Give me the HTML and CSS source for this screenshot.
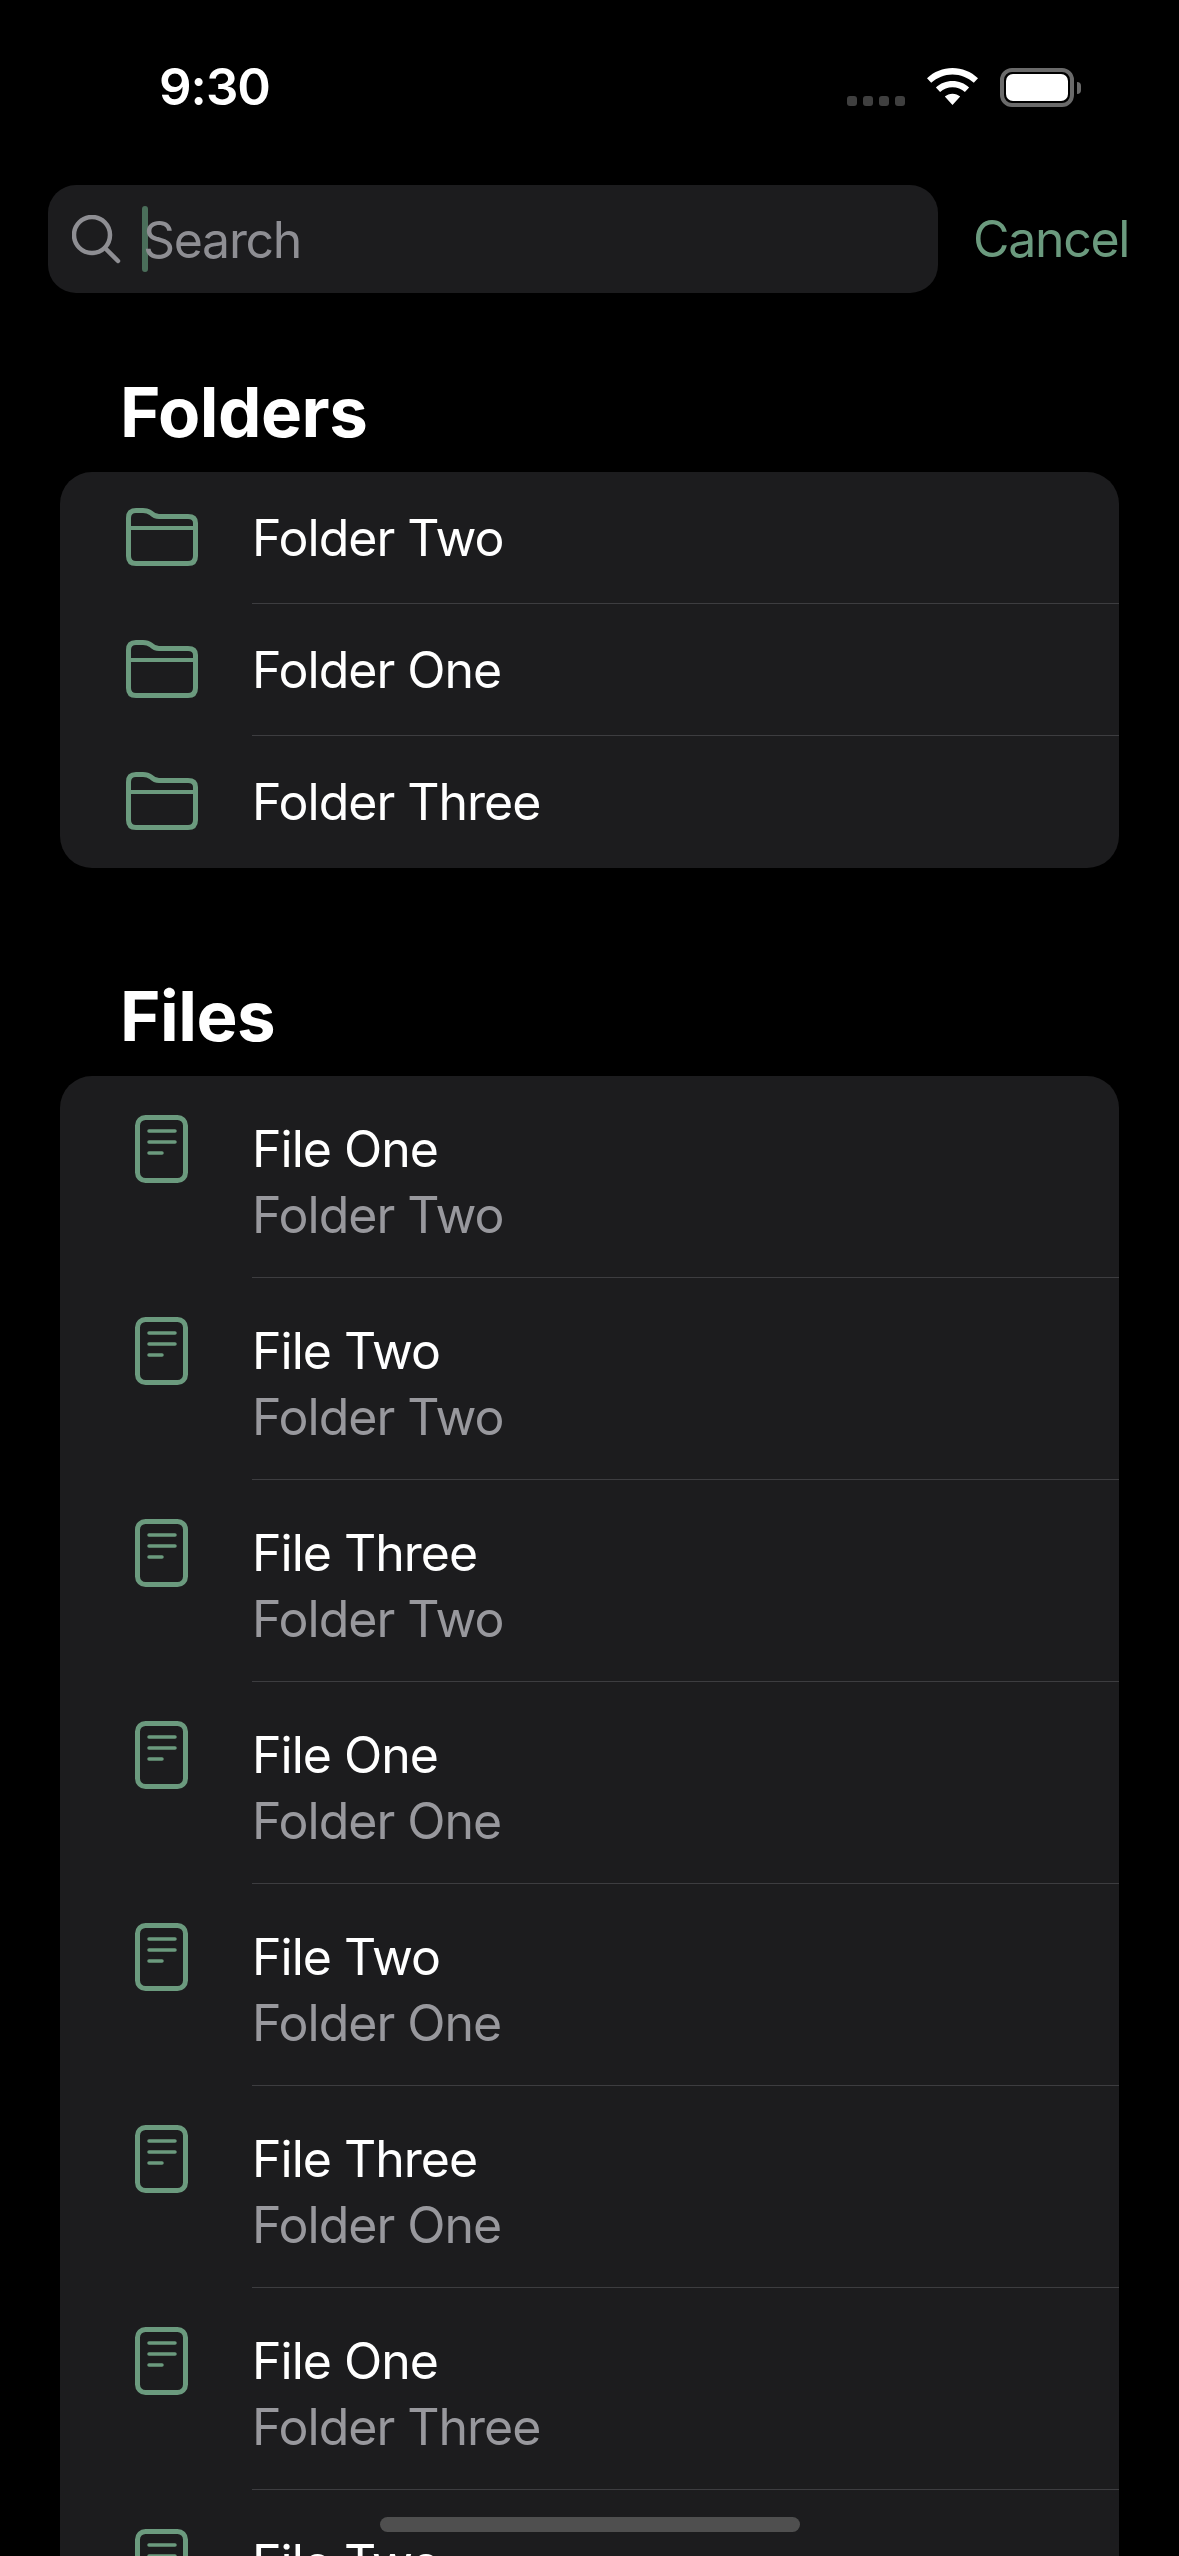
FILE: index.html
```html
<!DOCTYPE html>
<html lang="en">
<head>
<meta charset="utf-8">
<title>Search</title>
<link rel="stylesheet" href="styles.css">
</head>
<body>
<svg class="defs" width="0" height="0" aria-hidden="true">
  <symbol id="folder" viewBox="0 0 72 58"><g fill="none" stroke="currentColor" stroke-linejoin="round" stroke-linecap="round"><path stroke-width="5" d="M2.500 10C2.500 5 5 2.500 10 2.500H17C21 2.500 23 3.500 25 5C27 7 29 8.500 33 8.500H62C67 8.500 69.500 11 69.500 15V48C69.500 53 67 55.500 62 55.500H10C5 55.500 2.500 53 2.500 48Z"/><path stroke-width="4" d="M3 20H69" stroke-linecap="butt"/></g></symbol>
  <symbol id="file" viewBox="0 0 53 68"><g fill="none" stroke="currentColor" stroke-linecap="round"><rect x="2.500" y="2.500" width="48" height="63" rx="8" stroke-width="5"/><path stroke-width="3.500" d="M14 16H40M14 27H40M14 38H27"/></g></symbol>
</svg>
<div class="screen">
  <header class="status">
    <span class="time">9:30</span>
    <div class="status-icons">
      <div class="signal"><i></i><i></i><i></i><i></i></div>
      <svg class="wifi" viewBox="0 0 51 37" width="51" height="37"><path fill="#fff" d="M25.5 0C35 0 44 3.700 51 10.200L46.800 14.800C40.900 9.500 33.500 6.400 25.500 6.400S10.100 9.500 4.200 14.800L0 10.200C7 3.700 16 0 25.500 0ZM25.500 13C31.800 13 37.600 15.400 42.100 19.400L37.900 24C34.500 21 30.200 19.300 25.500 19.300S16.500 21 13.100 24L8.900 19.400C13.400 15.400 19.200 13 25.500 13ZM25.500 25.700C28.400 25.700 31.100 26.800 33.200 28.600L25.500 37L17.800 28.600C19.900 26.800 22.600 25.700 25.500 25.700Z"/></svg>
      <div class="battery"><div class="battery-body"><div class="battery-fill"></div></div><div class="battery-nub"></div></div>
    </div>
  </header>
  <div class="search-row">
    <div class="search-field">
      <svg class="search-icon" viewBox="0 0 49 49" width="49" height="49"><g fill="none" stroke="#8e8e93" stroke-width="4.500" stroke-linecap="round"><circle cx="20" cy="20" r="18"/><path d="M33 33L46 46"/></g></svg>
      <span class="cursor"></span>
      <span class="placeholder">Search</span>
    </div>
    <span class="cancel">Cancel</span>
  </div>

  <h2 class="section-title">Folders</h2>
  <section class="card">
    <div class="row folder-row"><svg class="ic-folder"><use href="#folder"/></svg><div class="row-text"><div class="title">Folder Two</div></div></div>
    <div class="row folder-row"><svg class="ic-folder"><use href="#folder"/></svg><div class="row-text"><div class="title">Folder One</div></div></div>
    <div class="row folder-row"><svg class="ic-folder"><use href="#folder"/></svg><div class="row-text"><div class="title">Folder Three</div></div></div>
  </section>

  <h2 class="section-title files-title">Files</h2>
  <section class="card">
    <div class="row file-row"><svg class="ic-file"><use href="#file"/></svg><div class="row-text"><div class="title">File One</div><div class="sub">Folder Two</div></div></div>
    <div class="row file-row"><svg class="ic-file"><use href="#file"/></svg><div class="row-text"><div class="title">File Two</div><div class="sub">Folder Two</div></div></div>
    <div class="row file-row"><svg class="ic-file"><use href="#file"/></svg><div class="row-text"><div class="title">File Three</div><div class="sub">Folder Two</div></div></div>
    <div class="row file-row"><svg class="ic-file"><use href="#file"/></svg><div class="row-text"><div class="title">File One</div><div class="sub">Folder One</div></div></div>
    <div class="row file-row"><svg class="ic-file"><use href="#file"/></svg><div class="row-text"><div class="title">File Two</div><div class="sub">Folder One</div></div></div>
    <div class="row file-row"><svg class="ic-file"><use href="#file"/></svg><div class="row-text"><div class="title">File Three</div><div class="sub">Folder One</div></div></div>
    <div class="row file-row"><svg class="ic-file"><use href="#file"/></svg><div class="row-text"><div class="title">File One</div><div class="sub">Folder Three</div></div></div>
    <div class="row file-row"><svg class="ic-file"><use href="#file"/></svg><div class="row-text"><div class="title">File Two</div></div></div>
  </section>
  <div class="home-indicator"></div>
</div>
</body>
</html>
```
FILE: styles.css
```css
* { box-sizing: border-box; }
html, body { margin: 0; padding: 0; background: #000; }
body { width: 1179px; height: 2556px; overflow: hidden; font-family: Inter, "Liberation Sans", sans-serif; color: #fff; }
.defs { position: absolute; }
.screen { position: relative; width: 1179px; height: 2556px; overflow: hidden; }

.status { height: 185px; display: flex; justify-content: space-between; align-items: flex-start; padding: 59px 98px 0 159px; }
.time { font-size: 51px; line-height: 56px; font-weight: 600; letter-spacing: -1px; }
.status-icons { display: flex; align-items: flex-start; padding-top: 9px; }
.signal { display: flex; gap: 6px; margin-top: 28px; margin-right: 22px; }
.signal i { width: 10px; height: 10px; border-radius: 3px; background: #3f3f3f; }
.wifi { margin-right: 22px; }
.battery { display: flex; align-items: center; }
.battery-body { width: 74px; height: 39px; border: 4px solid #6a6a6a; border-radius: 12px; padding: 2px; }
.battery-fill { width: 100%; height: 100%; background: #fff; border-radius: 7px; }
.battery-nub { width: 4px; height: 12px; background: #6a6a6a; border-radius: 0 4px 4px 0; margin-left: 3px; }

.search-row { display: flex; align-items: center; padding-left: 48px; }
.search-field { width: 890px; height: 108px; background: #1c1c1e; border-radius: 28px; display: flex; align-items: center; padding-left: 24px; }
.search-icon { flex: none; margin-top: 1px; }
.cursor { flex: none; width: 6px; height: 66px; background: #4a6e5a; border-radius: 3px; margin-left: 21px; margin-right: -5px; }
.placeholder { font-size: 50px; line-height: 60px; color: #8e8e93; margin-top: 2px; letter-spacing: -1.3px; }
.cancel { font-size: 50px; line-height: 60px; color: #6b9a7e; margin-left: 35px; letter-spacing: -1.3px; }

.section-title { margin: 0; padding: 79px 0 20px 120px; font-size: 69px; line-height: 80px; font-weight: 700; letter-spacing: -0.5px; }
.files-title { padding-top: 108px; }

.card { margin: 0 60px; background: #1c1c1e; border-radius: 32px; overflow: hidden; }
.row { display: flex; align-items: flex-start; }
.row-text { flex: 1; min-width: 0; border-bottom: 1px solid #3d3d40; }
.row:last-child .row-text { border-bottom: 0; }
.title { font-size: 50px; line-height: 66px; letter-spacing: -1px; }
.sub { font-size: 50px; line-height: 66px; letter-spacing: -1px; color: #98989d; }
.folder-row { height: 132px; }
.folder-row .row-text { height: 132px; padding-top: 33px; }
.ic-folder { flex: none; width: 72px; height: 58px; margin: 36px 54px 0 66px; color: #6b9a7e; }
.file-row { height: 202px; }
.file-row .row-text { height: 202px; padding-top: 40px; }
.ic-file { flex: none; width: 53px; height: 68px; margin: 39px 64px 0 75px; color: #6b9a7e; }

.home-indicator { position: absolute; left: 380px; top: 2517px; width: 420px; height: 15px; border-radius: 8px; background: #4f4f4f; }
```
